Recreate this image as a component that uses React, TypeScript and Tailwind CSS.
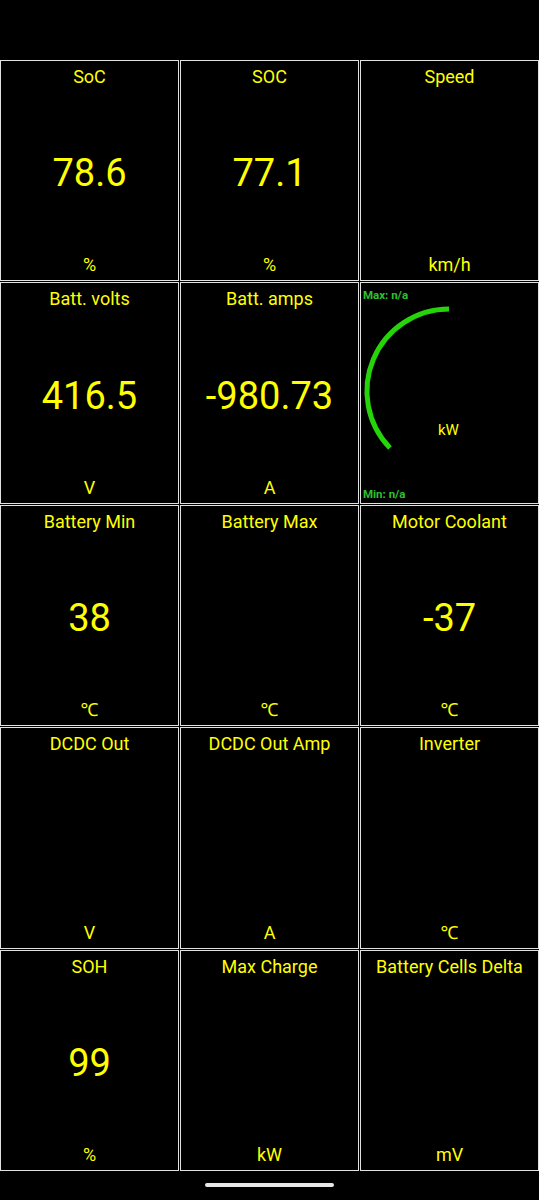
import React from "react";

type Cell = { title: string; value?: string; unit: string; gauge?: boolean };

const cells: Cell[] = [
  { title: "SoC", value: "78.6", unit: "%" },
  { title: "SOC", value: "77.1", unit: "%" },
  { title: "Speed", unit: "km/h" },
  { title: "Batt. volts", value: "416.5", unit: "V" },
  { title: "Batt. amps", value: "-980.73", unit: "A" },
  { title: "", unit: "kW", gauge: true },
  { title: "Battery Min", value: "38", unit: "℃" },
  { title: "Battery Max", unit: "℃" },
  { title: "Motor Coolant", value: "-37", unit: "℃" },
  { title: "DCDC Out", unit: "V" },
  { title: "DCDC Out Amp", unit: "A" },
  { title: "Inverter", unit: "℃" },
  { title: "SOH", value: "99", unit: "%" },
  { title: "Max Charge", unit: "kW" },
  { title: "Battery Cells Delta", unit: "mV" },
];

function Gauge() {
  return (
    <div className="relative border border-[#e2e2e2] bg-black">
      <div className="absolute left-[2px] top-[5px] text-[11.5px] font-bold leading-[14px] text-[#2fc12f]">
        Max: n/a
      </div>
      <svg className="absolute left-0 top-0" width="179" height="221" viewBox="0 0 179 221">
        <path
          d="M 88 26 A 82 82 0 0 0 29 165"
          fill="none"
          stroke="#26d40a"
          strokeWidth="5"
        />
      </svg>
      <div className="absolute left-[77px] top-[138px] text-[15px] leading-[18px] text-[#ffff00]">
        kW
      </div>
      <div className="absolute bottom-[2px] left-[2px] text-[11.5px] font-bold leading-[14px] text-[#2fc12f]">
        Min: n/a
      </div>
    </div>
  );
}

export default function App() {
  return (
    <div
      className="min-h-[1200px] w-[539px] bg-black"
      style={{ fontFamily: "Roboto, 'Noto Sans', sans-serif" }}
    >
      <div className="h-[60px]" />
      <div className="grid h-[1111px] grid-cols-3 grid-rows-5 gap-px">
        {cells.map((c, i) =>
          c.gauge ? (
            <Gauge key={i} />
          ) : (
            <div
              key={i}
              className="flex flex-col items-center justify-between border border-[#e2e2e2] bg-black px-1 pb-[5px] pt-[6px] text-[#ffff00]"
            >
              <div className="text-[18px] leading-[20px]">{c.title}</div>
              <div className="pt-[4px] text-[38px] leading-[44px]">{c.value ?? ""}</div>
              <div className="text-[18px] leading-[20px]">{c.unit}</div>
            </div>
          )
        )}
      </div>
      <div className="flex justify-center pt-[12px]">
        <div className="h-[4px] w-[129px] rounded-full bg-[#e8e8e8]" />
      </div>
    </div>
  );
}
